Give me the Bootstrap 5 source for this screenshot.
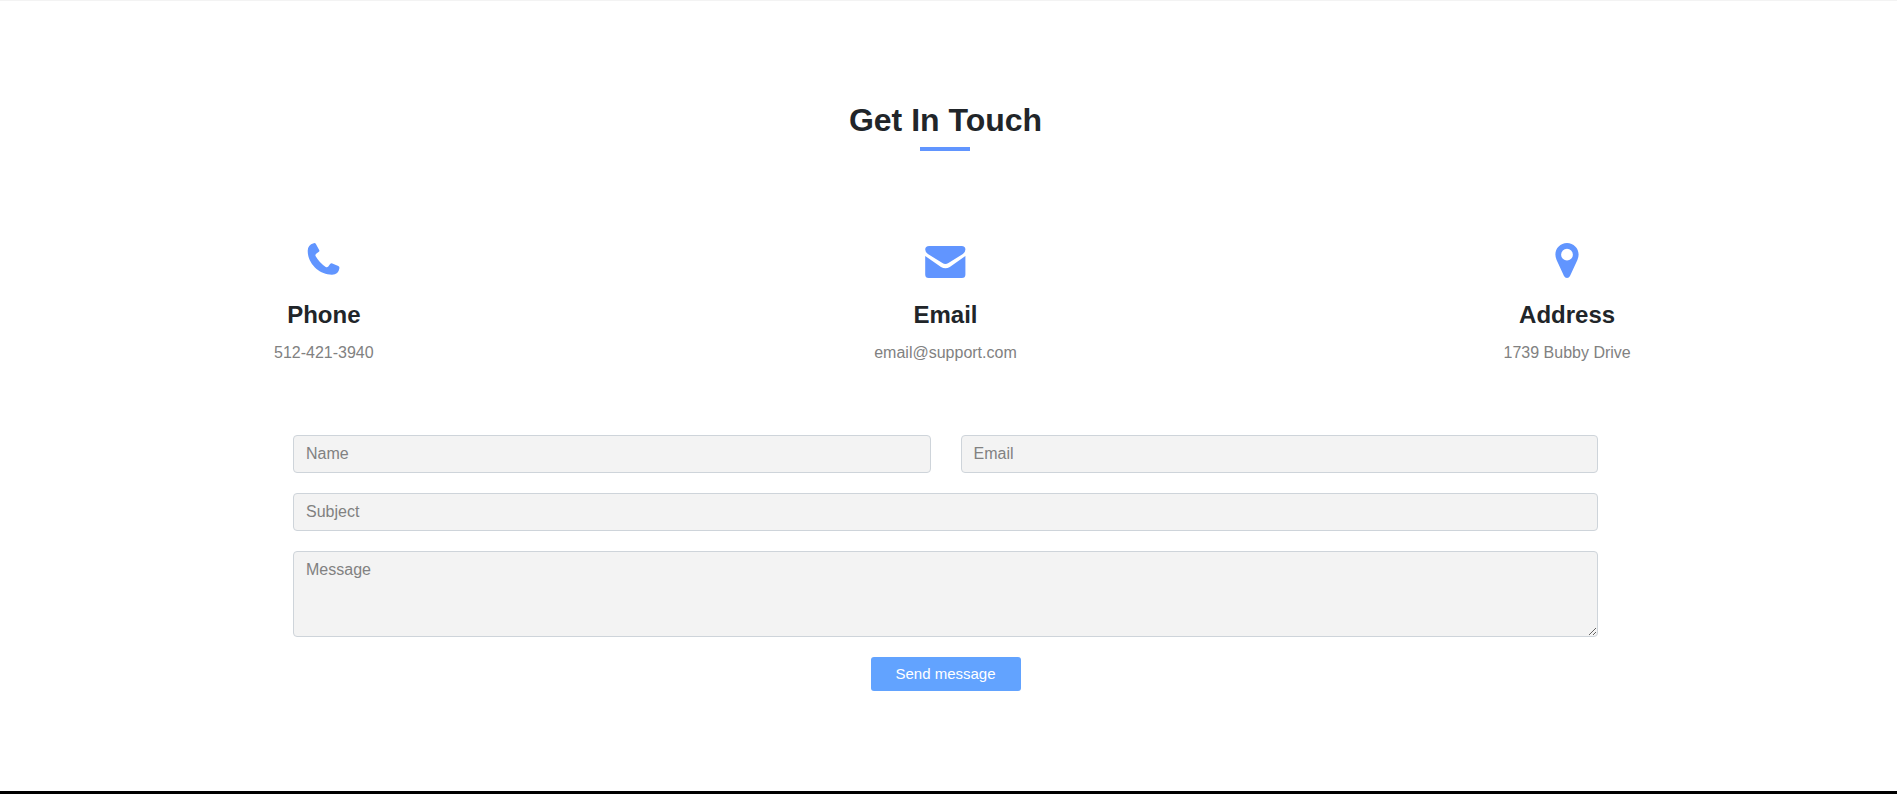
<!DOCTYPE html>
<html lang="en">
<head>
<meta charset="utf-8">
<meta name="viewport" content="width=device-width, initial-scale=1">
<title>Get In Touch</title>
<link href="https://cdn.jsdelivr.net/npm/bootstrap@5.3.0/dist/css/bootstrap.min.css" rel="stylesheet">
<style>
body { font-family: "Liberation Sans", Arial, sans-serif; height: 794px; overflow: hidden; background: #fff; color: #212529; }
.contact { height: 790px; width: 1891px; padding-top: 99px; }
.contact-title { font-size: 32px; font-weight: 700; line-height: 40px; }
.title-line { width: 50px; height: 4px; background: #6195ff; margin-top: 7px; margin-right: 1px; }
.info { width: 1865px; margin-top: 90px; }
.info svg { display: block; margin: 0 auto; fill: #6195ff; }
.info h3 { font-size: 24px; font-weight: 700; line-height: 29px; margin: 17px 0 12px; }
.info p { color: #818181; line-height: 24px; margin: 0; }
.contact-form { width: 1305px; margin-top: 70px; gap: 20px; }
.contact-form .form-control { background: #f3f3f3; border-color: #ced4da; border-radius: 4px; height: 38px; }
.contact-form .form-control::placeholder { color: #818181; }
.contact-form textarea.form-control { height: 86px; }
.name-row { gap: 30px; }
.btn-send, .btn-send:hover { width: 150px; height: 34px; padding: 0; border: 0; border-radius: 3px; background: #62a3ff; color: #fff; font-size: 15px; }
.top-line { height: 1px; background: #f3f3f3; }
.page-footer { height: 3px; background: #000; }
</style>
</head>
<body>
<div class="top-line"></div>
<section class="contact d-flex flex-column align-items-center">
  <h2 class="contact-title m-0">Get In Touch</h2>
  <div class="title-line"></div>
  <div class="info row g-0 text-center">
    <div class="col-4">
      <svg width="42" height="42" viewBox=".5 0 42 42"><path d="M11.2 2.2 Q12.7 1.8 13.4 3 L16.8 9.3 Q17.2 10.3 16 11 L14.3 12.2 Q12.2 13.5 13.2 15.3 Q17 22 23.2 25.9 Q24.7 26.6 25.8 25.4 L27.6 22.9 Q28.5 22 29.8 22.4 L35.8 25 Q37.2 25.7 36.9 27.2 Q36 33.6 29.5 33.7 C17 33.8 5.2 22.8 5.2 9.8 Q5.2 3.7 11.2 2.2Z"/></svg>
      <h3>Phone</h3>
      <p>512-421-3940</p>
    </div>
    <div class="col-4">
      <svg width="42" height="42" viewBox="-.4 0 42 42"><path d="M4.8 5 H37.2 Q41 5 41 8.6 Q41 11.2 38.5 13 L24 22 Q21 23.8 18 22 L3.5 13 Q.8 11.2 .8 8.6 Q.8 5 4.8 5Z M.8 15 L16.6 26 Q21 28.5 25.4 26 L41 15 V33.5 Q41 37 37.5 37 H4.3 Q.8 37 .8 33.5Z"/></svg>
      <h3>Email</h3>
      <p>email@support.com</p>
    </div>
    <div class="col-4">
      <svg width="42" height="42" viewBox="0 0 42 42"><path fill-rule="evenodd" d="M21 2 C27.5 2 32.6 7.2 32.6 13.6 Q32.6 16.5 31.4 19 L24 35 Q23 37 21 37 Q19 37 18 35 L10.6 19 Q9.4 16.5 9.4 13.6 C9.4 7.2 14.5 2 21 2Z M21 7.8 A5.9 5.9 0 1 0 21 19.6 A5.9 5.9 0 1 0 21 7.8Z"/></svg>
      <h3>Address</h3>
      <p>1739 Bubby Drive</p>
    </div>
  </div>
  <form class="contact-form d-flex flex-column">
    <div class="name-row d-flex">
      <input class="form-control" type="text" placeholder="Name" aria-label="Name">
      <input class="form-control" type="email" placeholder="Email" aria-label="Email">
    </div>
    <input class="form-control" type="text" placeholder="Subject" aria-label="Subject">
    <textarea class="form-control" placeholder="Message" aria-label="Message"></textarea>
    <button class="btn btn-send align-self-center" type="button">Send message</button>
  </form>
</section>
<footer class="page-footer"></footer>
<script src="https://cdn.jsdelivr.net/npm/bootstrap@5.3.0/dist/js/bootstrap.bundle.min.js"></script>
</body>
</html>
